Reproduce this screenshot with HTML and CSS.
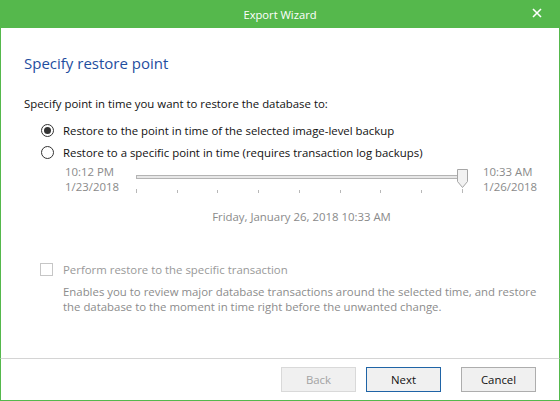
FILE: index.html
```html
<!DOCTYPE html>
<html>
<head>
<meta charset="utf-8">
<link rel="stylesheet" href="styles.css">
</head>
<body>
<div class="window">
  <div class="titlebar">
    <span class="spacer"></span>
    <span class="title">Export Wizard</span>
    <span class="close">
      <svg width="10" height="10" viewBox="0 0 10 10"><path d="M1 1L9 9M9 1L1 9" stroke="#fff" stroke-width="1.6" fill="none"/></svg>
    </span>
  </div>
  <div class="body">
    <h1 class="heading">Specify restore point</h1>
    <p class="intro">Specify point in time you want to restore the database to:</p>
    <div class="options">
      <div class="radio-row"><span class="radio checked"></span><span>Restore to the point in time of the selected image-level backup</span></div>
      <div class="radio-row"><span class="radio"></span><span>Restore to a specific point in time (requires transaction log backups)</span></div>
    </div>
    <div class="slider-row">
      <div class="slabel left"><div>10:12 PM</div><div>1/23/2018</div></div>
      <svg class="slider" width="348" height="30" viewBox="0 0 348 30">
        <rect x="9.5" y="11.5" width="328" height="3" fill="#e7e7e7" stroke="#b4b4b4"/>
        <path d="M330.5 5.5 H340.5 V17.5 L335.5 23.5 L330.5 17.5 Z" fill="#f2f2f2" stroke="#a6a6a6"/>
        <g stroke="#b8b8b8">
          <line x1="9.5" y1="25" x2="9.5" y2="29"/>
          <line x1="50.5" y1="26" x2="50.5" y2="29"/>
          <line x1="90.5" y1="26" x2="90.5" y2="29"/>
          <line x1="131.5" y1="26" x2="131.5" y2="29"/>
          <line x1="172.5" y1="26" x2="172.5" y2="29"/>
          <line x1="213.5" y1="26" x2="213.5" y2="29"/>
          <line x1="253.5" y1="26" x2="253.5" y2="29"/>
          <line x1="294.5" y1="26" x2="294.5" y2="29"/>
          <line x1="335.5" y1="25" x2="335.5" y2="29"/>
        </g>
      </svg>
      <div class="slabel right"><div>10:33 AM</div><div>1/26/2018</div></div>
    </div>
    <div class="date">Friday, January 26, 2018 10:33 AM</div>
    <div class="check-row"><span class="checkbox"></span><span>Perform restore to the specific transaction</span></div>
    <p class="desc">Enables you to review major database transactions around the selected time, and restore<br>the database to the moment in time right before the unwanted change.</p>
  </div>
  <div class="footer">
    <button class="btn disabled">Back</button>
    <button class="btn primary">Next</button>
    <button class="btn cancel">Cancel</button>
  </div>
</div>
</body>
</html>
```
FILE: styles.css
```css
html, body {
  margin: 0;
  padding: 0;
  width: 560px;
  height: 401px;
  overflow: hidden;
  background: #fff;
}
.window {
  width: 560px;
  height: 401px;
  display: flex;
  flex-direction: column;
  font-family: "Open Sans", "Noto Sans", sans-serif;
  font-size: 11.4px;
  color: #111;
}
.titlebar {
  height: 28px;
  flex: none;
  background: #55b84c;
  color: #fff;
  display: grid;
  grid-template-columns: 1fr auto 1fr;
  align-items: center;
}
.title {
  font-size: 11.2px;
}
.close {
  justify-self: end;
  margin-right: 18px;
  width: 10px;
  height: 10px;
  display: flex;
  margin-top: -2px;
}
.body {
  flex: 1;
  border-left: 1px solid #55b84c;
  border-right: 1px solid #55b84c;
  padding-left: 23px;
  padding-top: 25px;
}
.heading {
  margin: 0;
  font-size: 15px;
  font-weight: normal;
  line-height: 20px;
  color: #1f4ea0;
}
.intro {
  margin: 23px 0 0;
  line-height: 16px;
}
.options {
  margin-top: 7px;
  padding-left: 17px;
}
.radio-row {
  display: flex;
  align-items: center;
  height: 22px;
}
.radio {
  width: 13px;
  height: 13px;
  box-sizing: border-box;
  border: 1px solid #333;
  border-radius: 50%;
  margin-right: 9px;
  display: flex;
  align-items: center;
  justify-content: center;
}
.radio.checked::after {
  content: "";
  width: 7px;
  height: 7px;
  border-radius: 50%;
  background: #333;
}
.slider-row {
  display: flex;
  margin-top: 1px;
  padding-left: 41px;
  color: #8a8a8a;
  line-height: 15px;
}
.slabel.left {
  width: 62px;
}
.slider {
  display: block;
}
.slabel.right {
  margin-left: 8px;
}
.date {
  margin-top: 15px;
  margin-left: 112px;
  width: 331px;
  text-align: center;
  line-height: 16px;
  color: #8a8a8a;
}
.check-row {
  display: flex;
  align-items: center;
  margin-top: 36px;
  padding-left: 16px;
  height: 16px;
  color: #999;
}
.checkbox {
  width: 13px;
  height: 13px;
  box-sizing: border-box;
  border: 1px solid #c6c6c6;
  margin-right: 10px;
}
.desc {
  margin: 7px 0 0 39px;
  line-height: 15px;
  color: #8c8c8c;
  white-space: nowrap;
}
.footer {
  flex: none;
  height: 33px;
  border: 1px solid #55b84c;
  border-top: 1px solid #d4d4d4;
  display: flex;
  justify-content: flex-end;
  align-items: flex-start;
  padding: 8px 23px 0 0;
}
.btn {
  width: 75px;
  height: 25px;
  box-sizing: border-box;
  font-family: "Open Sans", "Noto Sans", sans-serif;
  font-size: 11.4px;
  background: #f0f0f0;
  border: 1px solid #adadad;
  color: #111;
  padding: 0;
  margin: 0;
}
.btn.disabled {
  border-color: #d9d9d9;
  color: #a3a3a3;
}
.btn.primary {
  margin-left: 10px;
  border-color: #1f64a6;
}
.btn.cancel {
  margin-left: 20px;
}
```
